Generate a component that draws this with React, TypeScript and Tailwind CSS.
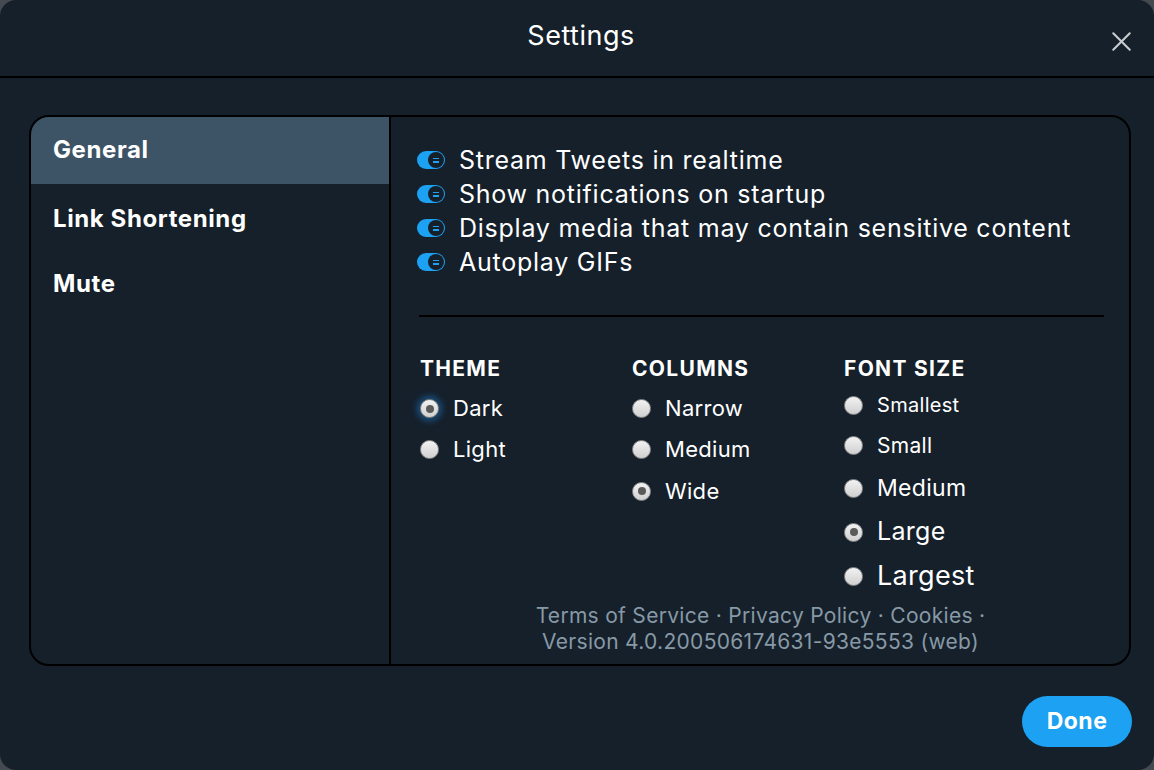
import { X } from 'lucide-react'

const toggles = [
  'Stream Tweets in realtime',
  'Show notifications on startup',
  'Display media that may contain sensitive content',
  'Autoplay GIFs',
]

const navItems = ['General', 'Link Shortening', 'Mute']

function Toggle() {
  return (
    <span className="flex items-center w-[28px] h-[18px] rounded-full bg-[#1da1f2] justify-end pr-[1px] shrink-0">
      <span className="w-[16px] h-[16px] rounded-full bg-[#15202b] flex flex-col items-center justify-center gap-[2px]">
        <span className="w-[6px] h-[1.5px] bg-[#1da1f2]" />
        <span className="w-[6px] h-[1.5px] bg-[#1da1f2]" />
      </span>
    </span>
  )
}

function Radio({ checked, focus }: { checked?: boolean; focus?: boolean }) {
  return (
    <span
      className={`w-[19px] h-[19px] rounded-full shrink-0 flex items-center justify-center bg-gradient-to-b from-[#f2f2f2] to-[#d0d0d0] border border-[#8f8f8f] ${
        focus ? 'shadow-[0_0_6px_3px_rgba(29,120,200,0.55)]' : ''
      }`}
    >
      {checked && <span className="w-[8px] h-[8px] rounded-full bg-[#5a5a5a]" />}
    </span>
  )
}

function Group({
  title,
  items,
}: {
  title: string
  items: { label: string; checked?: boolean; focus?: boolean; size: string; gap: string }[]
}) {
  return (
    <div className="w-[212px]">
      <div className="text-[21px] font-bold text-white leading-[24px] tracking-[1.3px]">{title}</div>
      <div className="flex flex-col mt-[7px]">
        {items.map((it) => (
          <label key={it.label} className={`flex items-center gap-[14px] ${it.gap}`}>
            <Radio checked={it.checked} focus={it.focus} />
            <span className={`text-white tracking-[0.3px] ${it.size}`}>{it.label}</span>
          </label>
        ))}
      </div>
    </div>
  )
}

export default function App() {
  return (
    <div
      className="w-[1154px] h-[770px] bg-[#454a50]"
      style={{ fontFamily: 'Inter, "Noto Sans", sans-serif' }}
    >
      <div className="w-full h-full rounded-[16px] bg-[#15202b] flex flex-col">
        {/* Header */}
        <header className="h-[78px] shrink-0 border-b-2 border-black flex items-center justify-center relative">
          <h1 className="text-[27px] text-white leading-none tracking-[0.5px] -mt-[6px] ml-[8px]">Settings</h1>
          <button className="absolute right-[16px] top-[25px] text-[#c8ccd0]">
            <X size={33} strokeWidth={1.5} />
          </button>
        </header>

        {/* Panel */}
        <div className="mt-[37px] ml-[29px] mr-[23px] h-[551px] border-2 border-black rounded-[20px] flex overflow-hidden">
          <nav className="w-[360px] shrink-0 border-r-2 border-black flex flex-col">
            {navItems.map((label, i) => (
              <div
                key={label}
                className={`h-[67px] flex items-center px-[22px] text-[24px] tracking-[0.6px] font-bold text-white ${
                  i === 0 ? 'bg-[#3d5466] pb-[2px]' : 'pt-[2px]'
                } ${i === 2 ? '-mt-[2px]' : ''}`}
              >
                {label}
              </div>
            ))}
          </nav>

          <div className="flex-1 flex flex-col pl-[26px] pr-[25px] pt-[26px]">
            <div className="flex flex-col">
              {toggles.map((t) => (
                <div key={t} className="h-[34px] flex items-center gap-[14px]">
                  <Toggle />
                  <span className="text-[25px] tracking-[0.75px] text-white leading-none">{t}</span>
                </div>
              ))}
            </div>

            <div className="mt-[36px] ml-[2px] border-t-2 border-black" />

            <div className="flex mt-[40px] ml-[3px]">
              <Group
                title="THEME"
                items={[
                  { label: 'Dark', checked: true, focus: true, size: 'text-[22px]', gap: 'h-[41px]' },
                  { label: 'Light', size: 'text-[22px]', gap: 'h-[41px]' },
                ]}
              />
              <Group
                title="COLUMNS"
                items={[
                  { label: 'Narrow', size: 'text-[22px]', gap: 'h-[41px]' },
                  { label: 'Medium', size: 'text-[22px]', gap: 'h-[41px]' },
                  { label: 'Wide', checked: true, size: 'text-[22px]', gap: 'h-[42px]' },
                ]}
              />
              <Group
                title="FONT SIZE"
                items={[
                  { label: 'Smallest', size: 'text-[20px]', gap: 'h-[38px] -mt-[2px]' },
                  { label: 'Small', size: 'text-[21px]', gap: 'h-[43px]' },
                  { label: 'Medium', size: 'text-[23px]', gap: 'h-[43px]' },
                  { label: 'Large', checked: true, size: 'text-[25px]', gap: 'h-[44px]' },
                  { label: 'Largest', size: 'text-[27px]', gap: 'h-[45px]' },
                ]}
              />
            </div>

            <div className="mt-[4px] text-center text-[21px] tracking-[0.3px] leading-[26px] text-[#8899a6]">
              <div>Terms of Service · Privacy Policy · Cookies ·</div>
              <div>Version 4.0.200506174631-93e5553 (web)</div>
            </div>
          </div>
        </div>

        {/* Footer */}
        <div className="flex justify-end mt-[30px] mr-[22px]">
          <button className="h-[51px] w-[110px] rounded-full bg-[#1da1f2] text-white text-[23px] tracking-[0.5px] font-bold">
            Done
          </button>
        </div>
      </div>
    </div>
  )
}
